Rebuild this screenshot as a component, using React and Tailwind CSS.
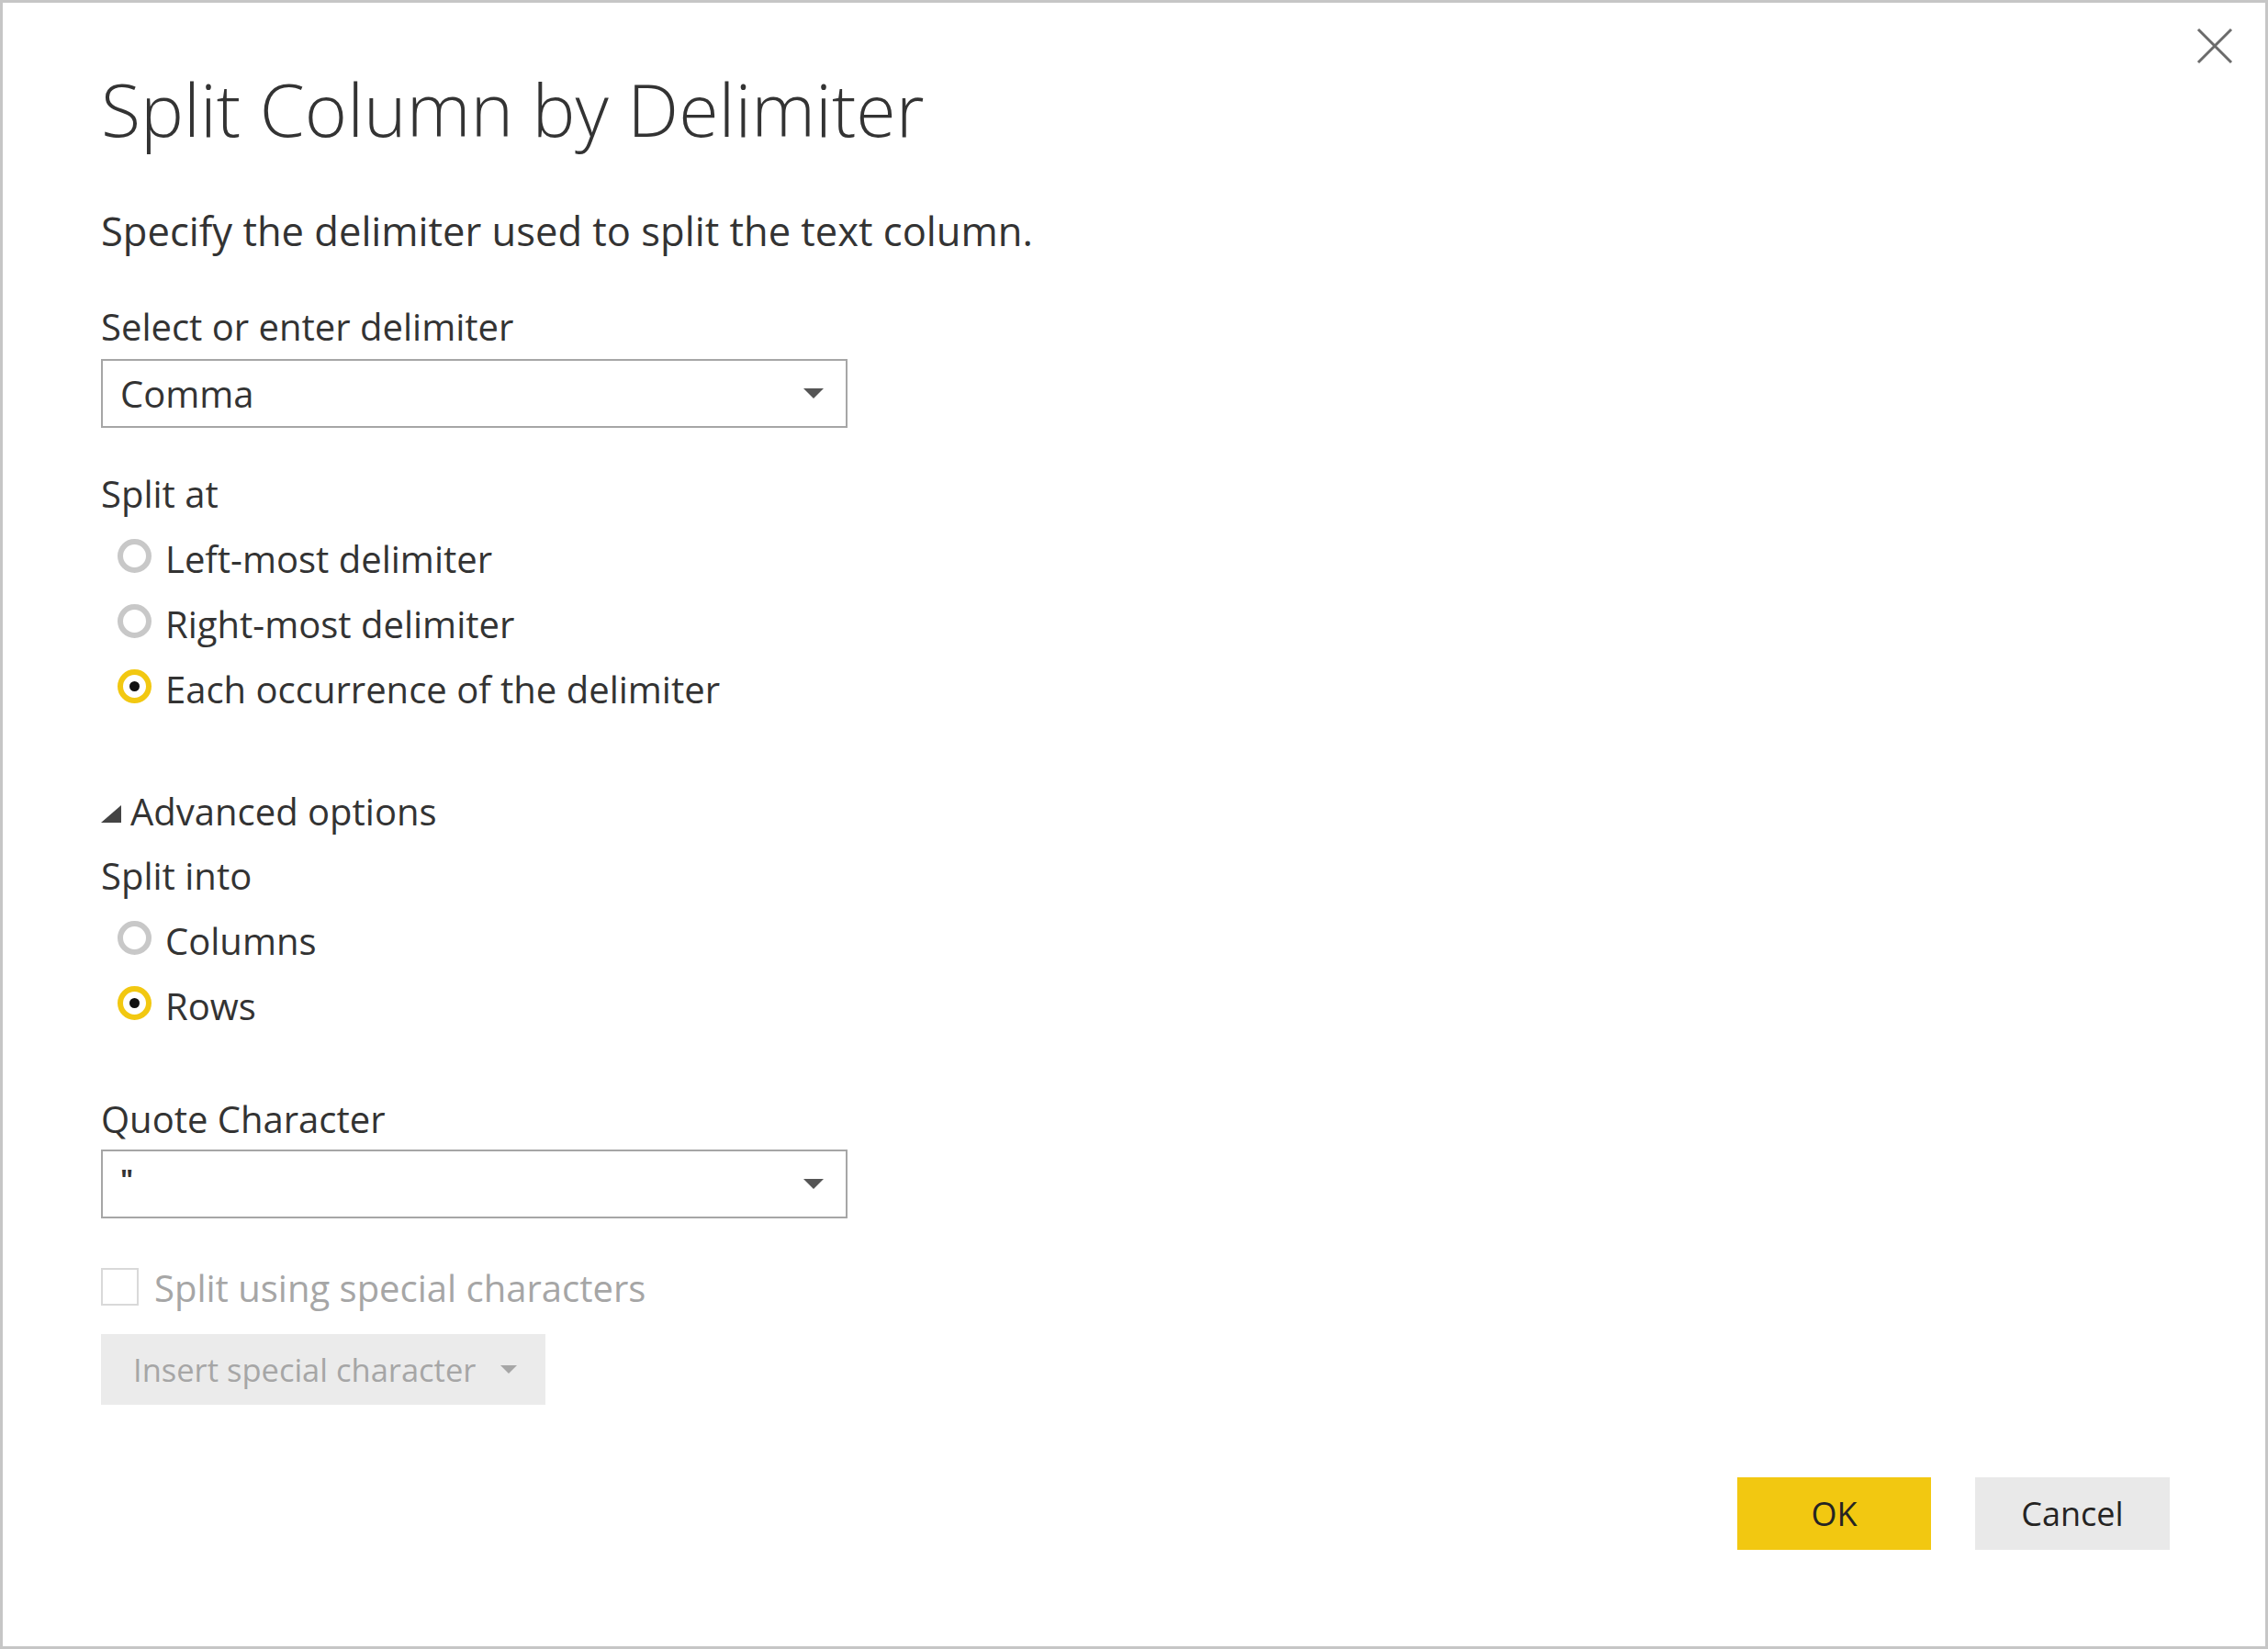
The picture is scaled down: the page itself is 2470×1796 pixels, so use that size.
import React from 'react';

const font = { fontFamily: '"Open Sans", "Noto Sans", "Liberation Sans", sans-serif' };

function Radio({ label, checked }) {
  return (
    <div className="flex h-[71px] items-start pl-[18px]">
      <span
        className={
          'mt-[14px] flex h-[37px] w-[37px] shrink-0 items-center justify-center rounded-full border-[6px] bg-white ' +
          (checked ? 'border-[#f2c811]' : 'border-[#c8c8c8]')
        }
      >
        {checked && <span className="h-[11px] w-[11px] rounded-full bg-[#111]" />}
      </span>
      <span className="ml-[15px] text-[40px] leading-[71px] text-[#333]">{label}</span>
    </div>
  );
}

function Select({ value, valueCls = 'text-[40px] text-[#333]' }) {
  return (
    <div className="flex h-[75px] w-[813px] items-center justify-between border-2 border-[#a6a6a6] bg-white pl-[19px] pr-[24px]">
      <span className={valueCls}>{value}</span>
      <svg width="22" height="12" viewBox="0 0 22 12">
        <polygon points="0,0 22,0 11,11" fill="#555" />
      </svg>
    </div>
  );
}

export default function App() {
  return (
    <div style={font} className="relative h-[1796px] w-[2470px] border-[3px] border-[#c6c6c6] bg-white">
      <button className="absolute right-[34px] top-[26px] flex h-[42px] w-[42px] items-center justify-center">
        <svg width="40" height="40" viewBox="0 0 40 40">
          <path d="M2 2 L38 38 M38 2 L2 38" stroke="#6b6b6b" strokeWidth="3" />
        </svg>
      </button>

      <div className="flex flex-col pl-[107px] pr-[104px]">
        <h1 className="mt-[61px] h-[110px] text-[79px] font-light leading-[110px] text-[#333]">
          Split Column by Delimiter
        </h1>
        <p className="mt-[50px] h-[56px] text-[43.5px] leading-[56px] text-[#333]">
          Specify the delimiter used to split the text column.
        </p>

        <div className="mt-[48px] h-[56px] text-[40px] leading-[56px] text-[#333]">Select or enter delimiter</div>
        <div className="mt-[7px]">
          <Select value="Comma" />
        </div>

        <div className="mt-[44px] h-[56px] text-[40px] leading-[56px] text-[#333]">Split at</div>
        <div className="mt-[7px] flex flex-col">
          <Radio label="Left-most delimiter" />
          <Radio label="Right-most delimiter" />
          <Radio label="Each occurrence of the delimiter" checked />
        </div>

        <div className="mt-[70px] flex h-[56px] items-center">
          <svg width="22" height="19" viewBox="0 0 22 19" className="mt-[4px]">
            <polygon points="22,0 22,19 0,19" fill="#444" />
          </svg>
          <span className="ml-[10px] text-[40px] leading-[56px] text-[#333]">Advanced options</span>
        </div>
        <div className="mt-[14px] h-[56px] text-[40px] leading-[56px] text-[#333]">Split into</div>
        <div className="mt-[7px] flex flex-col">
          <Radio label="Columns" />
          <Radio label="Rows" checked />
        </div>

        <div className="mt-[60px] h-[56px] text-[40px] leading-[56px] text-[#333]">Quote Character</div>
        <div className="mt-[5px]">
          <Select value={'"'} valueCls="text-[30px] font-bold text-[#333] -mt-[10px]" />
        </div>

        <div className="mt-[48px] flex h-[56px] items-start">
          <span className="mt-[6px] h-[41px] w-[41px] shrink-0 border-2 border-[#d9d9d9] bg-white" />
          <span className="ml-[17px] text-[40px] leading-[56px] text-[#a6a6a6]">Split using special characters</span>
        </div>

        <div className="mt-[22px]">
          <button className="flex h-[77px] w-[484px] items-center whitespace-nowrap bg-[#ebebeb] pl-[35px] text-[34.5px] text-[#a6a6a6]">
            <span>Insert special character</span>
            <svg width="18" height="10" viewBox="0 0 18 10" className="ml-[27px]">
              <polygon points="0,0 18,0 9,9" fill="#a6a6a6" />
            </svg>
          </button>
        </div>

        <div className="mt-[79px] flex justify-end gap-[48px]">
          <button className="h-[79px] w-[211px] bg-[#f2c811] text-[36px] text-[#252423]">OK</button>
          <button className="h-[79px] w-[212px] bg-[#e9e9e9] text-[36px] text-[#252423]">Cancel</button>
        </div>
      </div>
    </div>
  );
}
